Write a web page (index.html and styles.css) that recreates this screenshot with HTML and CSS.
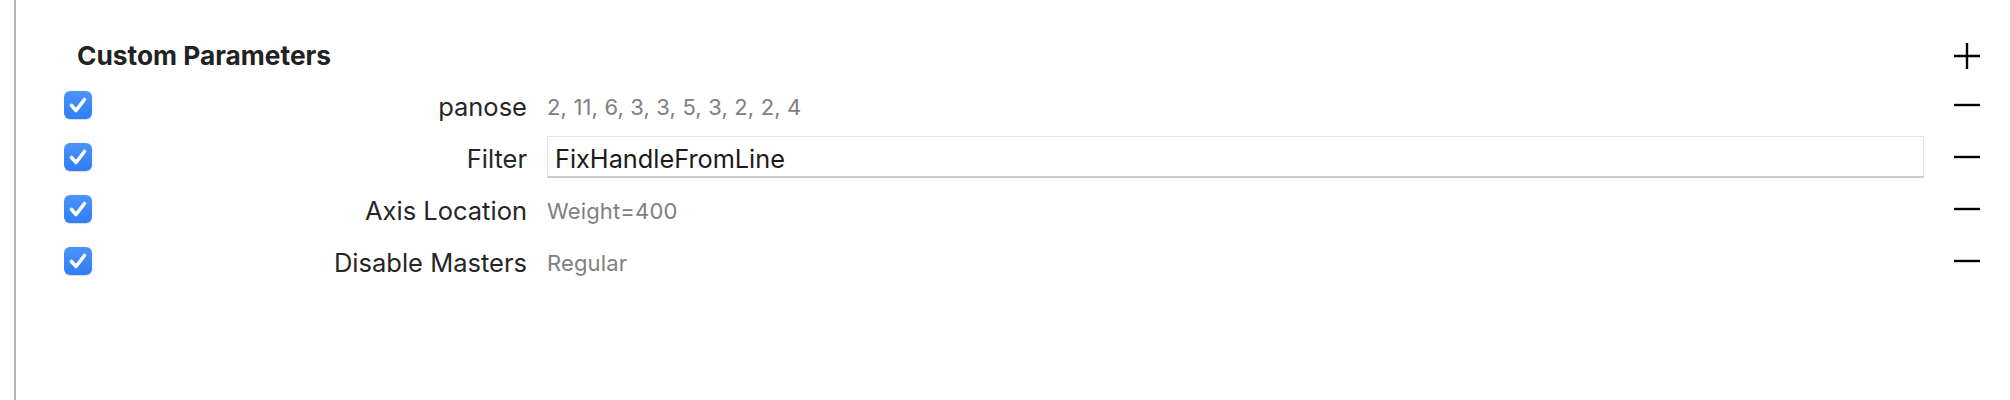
FILE: index.html
```html
<!DOCTYPE html>
<html>
<head>
<meta charset="utf-8">
<link rel="stylesheet" href="styles.css">
</head>
<body>
<div class="page">
  <div class="panel">
    <div class="header">
      <div class="title">Custom Parameters</div>
      <button class="icon-btn" aria-label="Add">
        <svg width="26" height="26" viewBox="0 0 26 26"><path d="M0 13H26M13 0V26" stroke="#000" stroke-width="2.4" fill="none"/></svg>
      </button>
    </div>
    <div class="rows">
      <div class="row">
        <span class="check"><svg width="28" height="28" viewBox="0 0 28 28"><path d="M7.5 14.5L12 19.5L20.5 8.5" stroke="#fff" stroke-width="3.6" stroke-linecap="round" stroke-linejoin="round" fill="none"/></svg></span>
        <span class="label">panose</span>
        <span class="value">2, 11, 6, 3, 3, 5, 3, 2, 2, 4</span>
        <button class="icon-btn" aria-label="Remove"><svg width="26" height="26" viewBox="0 0 26 26"><path d="M0 13H26" stroke="#000" stroke-width="2.4" fill="none"/></svg></button>
      </div>
      <div class="row">
        <span class="check"><svg width="28" height="28" viewBox="0 0 28 28"><path d="M7.5 14.5L12 19.5L20.5 8.5" stroke="#fff" stroke-width="3.6" stroke-linecap="round" stroke-linejoin="round" fill="none"/></svg></span>
        <span class="label">Filter</span>
        <span class="field">FixHandleFromLine</span>
        <button class="icon-btn" aria-label="Remove"><svg width="26" height="26" viewBox="0 0 26 26"><path d="M0 13H26" stroke="#000" stroke-width="2.4" fill="none"/></svg></button>
      </div>
      <div class="row">
        <span class="check"><svg width="28" height="28" viewBox="0 0 28 28"><path d="M7.5 14.5L12 19.5L20.5 8.5" stroke="#fff" stroke-width="3.6" stroke-linecap="round" stroke-linejoin="round" fill="none"/></svg></span>
        <span class="label">Axis Location</span>
        <span class="value">Weight=400</span>
        <button class="icon-btn" aria-label="Remove"><svg width="26" height="26" viewBox="0 0 26 26"><path d="M0 13H26" stroke="#000" stroke-width="2.4" fill="none"/></svg></button>
      </div>
      <div class="row">
        <span class="check"><svg width="28" height="28" viewBox="0 0 28 28"><path d="M7.5 14.5L12 19.5L20.5 8.5" stroke="#fff" stroke-width="3.6" stroke-linecap="round" stroke-linejoin="round" fill="none"/></svg></span>
        <span class="label">Disable Masters</span>
        <span class="value">Regular</span>
        <button class="icon-btn" aria-label="Remove"><svg width="26" height="26" viewBox="0 0 26 26"><path d="M0 13H26" stroke="#000" stroke-width="2.4" fill="none"/></svg></button>
      </div>
    </div>
  </div>
</div>
</body>
</html>
```

FILE: styles.css
```css
html, body {
  margin: 0;
  padding: 0;
  background: #ffffff;
}
body {
  font-family: Inter, "Liberation Sans", sans-serif;
  color: #242424;
}
.page {
  width: 2010px;
  height: 400px;
  padding-left: 14px;
  box-sizing: border-box;
  overflow: hidden;
}
.panel {
  height: 400px;
  border-left: 2px solid #b5b5b5;
  box-sizing: border-box;
  padding: 32px 30px 0 48px;
}
.header {
  height: 47px;
  display: flex;
  align-items: center;
  justify-content: space-between;
}
.title {
  font-size: 26.3px;
  font-weight: 700;
  color: #222;
  padding-left: 13px;
  line-height: 32px;
}
.icon-btn {
  width: 26px;
  height: 26px;
  padding: 0;
  border: none;
  background: none;
  display: flex;
}
.rows {
  display: flex;
  flex-direction: column;
}
.row {
  height: 52px;
  display: grid;
  grid-template-columns: 28px 435px 1fr 26px;
  align-items: center;
}
.check {
  width: 28px;
  height: 28px;
  border-radius: 6px;
  background: linear-gradient(#4b93f8, #2f7ef6);
  box-shadow: 0 0.5px 1px rgba(0,0,0,0.15);
  display: flex;
}
.label {
  text-align: right;
  font-size: 25.5px;
  line-height: 32px;
  color: #262626;
  padding-top: 3px;
}
.value {
  margin-left: 20px;
  font-size: 22px;
  letter-spacing: 0.15px;
  line-height: 32px;
  color: #808080;
  padding-top: 3px;
}
.field {
  margin-left: 20px;
  margin-right: 30px;
  height: 42px;
  box-sizing: border-box;
  border: 1px solid #e4e4e4;
  border-bottom: 2px solid #cacaca;
  padding: 4px 0 0 7px;
  font-size: 25.3px;
  line-height: 36px;
  color: #1a1a1a;
  background: #fff;
}
```
